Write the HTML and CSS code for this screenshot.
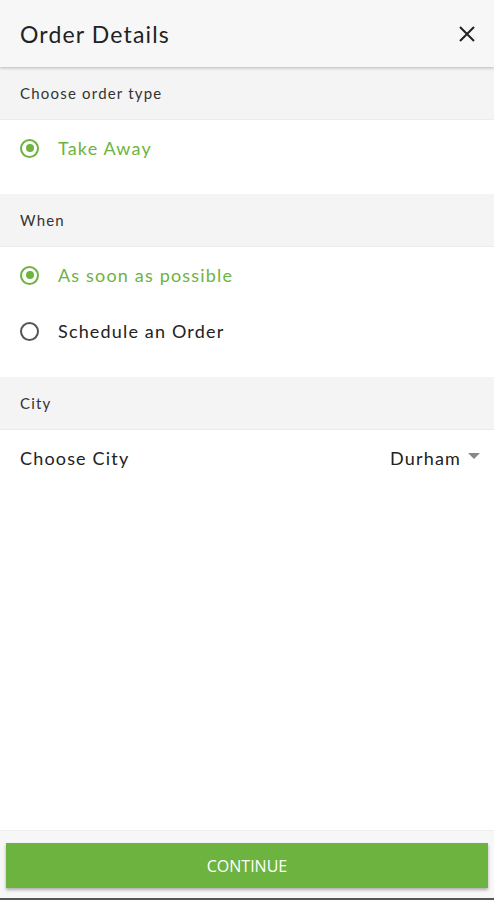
FILE: index.html
```html
<!DOCTYPE html>
<html lang="en">
<head>
  <meta charset="UTF-8" />
  <meta name="viewport" content="width=device-width, initial-scale=1.0"/>
  <title>Order Details</title>
  <link rel="stylesheet" href="styles.css">
</head>
<body>
  <div class="screen">
    <header class="topbar">
      <h1>Order Details</h1>
      <span class="close">
        <svg width="18" height="18" viewBox="0 0 18 18">
          <path d="M2 2L16 16M16 2L2 16" stroke="#222" stroke-width="2" fill="none"/>
        </svg>
      </span>
    </header>

    <div class="section-head">Choose order type</div>
    <div class="section-body">
      <div class="option selected">
        <span class="radio"></span>
        <span>Take Away</span>
      </div>
    </div>

    <div class="section-head">When</div>
    <div class="section-body">
      <div class="option selected">
        <span class="radio"></span>
        <span>As soon as possible</span>
      </div>
      <div class="option">
        <span class="radio"></span>
        <span>Schedule an Order</span>
      </div>
    </div>

    <div class="section-head">City</div>
    <div class="city-row">
      <span>Choose City</span>
      <span class="city-value">Durham <span class="caret"></span></span>
    </div>

    <div class="spacer"></div>

    <footer class="bottombar">
      <button class="continue">CONTINUE</button>
    </footer>
  </div>
</body>
</html>
```

FILE: styles.css
```css
body {
  margin: 0;
  font-family: Lato, "Open Sans", sans-serif;
  color: #222;
  background: #fff;
}

.screen {
  height: 900px;
  display: flex;
  flex-direction: column;
  border-bottom: 2px solid #555;
  box-sizing: border-box;
}

.topbar {
  height: 67px;
  flex-shrink: 0;
  display: flex;
  align-items: center;
  justify-content: space-between;
  padding: 0 18px 0 20px;
  background: #f7f7f7;
  box-shadow: 0 1px 3px rgba(0, 0, 0, 0.25);
  position: relative;
  z-index: 1;
}

.topbar h1 {
  margin: 0;
  font-size: 23px;
  font-weight: 400;
  letter-spacing: 0.05em;
  color: #222;
}

.close {
  display: flex;
}

.section-head {
  height: 52px;
  flex-shrink: 0;
  display: flex;
  align-items: center;
  padding: 0 20px;
  background: #f4f4f4;
  font-size: 15px;
  letter-spacing: 0.08em;
  color: #333;
  border-bottom: 1px solid #ececec;
}

.section-body {
  padding: 0 20px 18px;
}

.option {
  height: 56px;
  display: flex;
  align-items: center;
  gap: 19px;
  font-size: 18px;
  letter-spacing: 0.065em;
  color: #222;
}

.radio {
  width: 15px;
  height: 15px;
  border: 2px solid #555;
  border-radius: 50%;
  position: relative;
  flex-shrink: 0;
}

.option.selected {
  color: #6db33f;
}

.option.selected .radio {
  border-color: #6db33f;
}

.option.selected .radio::after {
  content: "";
  position: absolute;
  left: 3.5px;
  top: 3.5px;
  width: 8px;
  height: 8px;
  border-radius: 50%;
  background: #6db33f;
}

.city-row {
  height: 56px;
  display: flex;
  align-items: center;
  justify-content: space-between;
  padding: 0 14px 0 20px;
  font-size: 18px;
  letter-spacing: 0.065em;
}

.city-value {
  display: flex;
  align-items: center;
  gap: 7px;
}

.caret {
  width: 0;
  height: 0;
  border-left: 6px solid transparent;
  border-right: 6px solid transparent;
  border-top: 6px solid #888;
  margin-top: -4px;
}

.spacer {
  flex: 1;
}

.bottombar {
  background: #f7f7f7;
  border-top: 1px solid #eee;
  padding: 12px 6px 10px;
}

.continue {
  width: 100%;
  height: 45px;
  border: none;
  background: #6db33f;
  color: #fff;
  font-family: "Open Sans", sans-serif;
  font-size: 16px;
  box-shadow: 0 2px 3px rgba(0, 0, 0, 0.3);
  cursor: pointer;
}
```
